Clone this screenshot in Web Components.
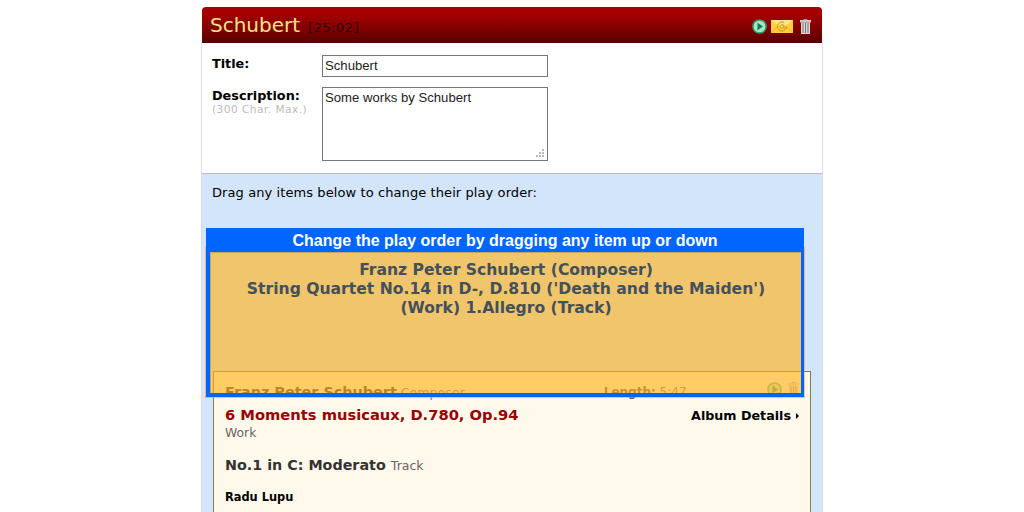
<!DOCTYPE html>
<html>
<head>
<meta charset="utf-8">
<title>Schubert</title>
<style>
  html, body { margin: 0; height: 512px; overflow: hidden; background: #fff; }
  body { font-family: "DejaVu Sans", Verdana, sans-serif; }
</style>
</head>
<body>
<playlist-panel>
  <panel-header slot="header" name="Schubert" time="[25:02]"></panel-header>
  <form-row slot="form" label="Title:" kind="input" value="Schubert"></form-row>
  <form-row slot="form" label="Description:" hint="(300 Char. Max.)" kind="area" value="Some works by Schubert"></form-row>
  <track-card composer="Franz Peter Schubert" length="5:47" work="6 Moments musicaux, D.780, Op.94" track="No.1 in C: Moderato" artist="Radu Lupu"></track-card>
  <drag-helper caption="Change the play order by dragging any item up or down">Franz Peter Schubert (Composer)<br>String Quartet No.14 in D-, D.810 ('Death and the Maiden')<br>(Work) 1.Allegro (Track)</drag-helper>
</playlist-panel>

<script>
// Icons shared by header and track row
const ICON_PLAY = `<svg width="15" height="15" viewBox="0 0 15 15"><circle cx="7.5" cy="7.5" r="6.6" fill="#a5e6c4" stroke="#2f9a6c" stroke-width="1.5"/><path d="M5.5 3.8 L11 7.5 L5.5 11.2 Z" fill="#14795a"/></svg>`;
const ICON_TRASH = `<svg width="11" height="15" viewBox="0 0 11 15"><rect x="3.5" y="0" width="4" height="1.5" fill="#999"/><rect x="0" y="1" width="11" height="2.5" fill="#c9c9c9"/><rect x="1" y="3.5" width="9" height="11.5" fill="#d8d8d8"/><path d="M3 4v10M5.5 4v10M8 4v10" stroke="#777" stroke-width="1"/></svg>`;
const ICON_MAIL = `<svg width="22" height="13" viewBox="0 0 22 13"><rect width="22" height="13" fill="#fdd03f"/><path d="M0 0 L11 8 L22 0 Z" fill="#ffe583"/><path d="M0 13 L7 6 M22 13 L15 6" stroke="#eeb327" stroke-width="1"/><circle cx="11" cy="6.5" r="4.5" fill="none" stroke="#cf9520" stroke-width="1" stroke-dasharray="23 5.3"/><circle cx="11" cy="6.5" r="1.8" fill="none" stroke="#cf9520" stroke-width="1"/><path d="M12.9 4.7 V7.6 Q13.2 8.8 14.6 8" fill="none" stroke="#cf9520" stroke-width="1"/></svg>`;

class PlaylistPanel extends HTMLElement {
  constructor() {
    super();
    this.attachShadow({ mode: 'open' }).innerHTML = `
      <style>
        :host { display: block; position: relative; width: 622px; margin: 7px 0 0 201px; height: 505px; }
        .wrap { display: flex; flex-direction: column; height: 100%; }
        .form { background: #fff; padding: 12px 10px 12px 10px; border-left: 1px solid #ddd; border-right: 1px solid #ddd; border-bottom: 1px solid #bbb; display: flex; flex-direction: column; gap: 10px; }
        .body { flex: 1; background: #d3e5fa; padding: 11px 10px 0 11px; overflow: hidden; border-left: 1px solid #ddd; border-right: 1px solid #ddd; }
        .hint { font-size: 13px; letter-spacing: .09px; line-height: 16px; color: #000; margin-left: -1px; }
        .cards { margin-top: 170px; }
      </style>
      <div class="wrap">
        <slot name="header"></slot>
        <div class="form"><slot name="form"></slot></div>
        <div class="body">
          <div class="hint">Drag any items below to change their play order:</div>
          <div class="cards"><slot></slot></div>
        </div>
      </div>`;
  }
}

class PanelHeader extends HTMLElement {
  constructor() {
    super();
    this.attachShadow({ mode: 'open' });
  }
  connectedCallback() {
    this.shadowRoot.innerHTML = `
      <style>
        :host { display: flex; align-items: center; height: 36px; margin: 0 1px; padding: 0 11px 0 8px; border-radius: 4px 4px 0 0;
          background: linear-gradient(#a90000, #a10000 25%, #5a0000); }
        .name { font-size: 20px; color: #ffe08a; }
        .time { font-size: 13px; color: #2a0000; margin-left: 8px; letter-spacing: .5px; position: relative; top: 2px; }
        .icons { margin-left: auto; display: flex; align-items: center; padding-top: 2px; }
        .icons svg { display: block; }
        .icons svg:nth-child(2) { margin: 0 7px 0 4px; }
      </style>
      <span class="name">${this.getAttribute('name')}</span>
      <span class="time">${this.getAttribute('time')}</span>
      <div class="icons">${ICON_PLAY}${ICON_MAIL}${ICON_TRASH}</div>`;
  }
}

class FormRow extends HTMLElement {
  constructor() {
    super();
    this.attachShadow({ mode: 'open' });
  }
  connectedCallback() {
    const isArea = this.getAttribute('kind') === 'area';
    const hint = this.getAttribute('hint');
    this.shadowRoot.innerHTML = `
      <style>
        :host { display: flex; }
        .lab { width: 110px; flex: none; padding-top: 1px; }
        .lab b { display: block; font-size: 12.8px; line-height: 16px; color: #000; margin-bottom: -1px; }
        .lab small { display: block; font-size: 10.5px; letter-spacing: .5px; line-height: 12px; color: #bbb; }
        .field { width: 226px; box-sizing: border-box; border: 1px solid #777; background: #fff; color: #222;
          font: 13.15px/18px "Liberation Sans", Arial, sans-serif; padding: 1px 2px; position: relative; }
        .input { height: 22px; }
        .area { height: 74px; }
        .grip { position: absolute; right: 2px; bottom: 2px; }
      </style>
      <div class="lab"><b>${this.getAttribute('label')}</b>${hint ? `<small>${hint}</small>` : ''}</div>
      <div class="field ${isArea ? 'area' : 'input'}">${this.getAttribute('value')}${isArea ? `
        <svg class="grip" width="9" height="9" viewBox="0 0 9 9" fill="#bbb"><rect x="6" y="0" width="2" height="2"/><rect x="3" y="3" width="2" height="2"/><rect x="6" y="3" width="2" height="2"/><rect x="0" y="6" width="2" height="2"/><rect x="3" y="6" width="2" height="2"/><rect x="6" y="6" width="2" height="2"/></svg>` : ''}</div>`;
  }
}

class TrackCard extends HTMLElement {
  constructor() {
    super();
    this.attachShadow({ mode: 'open' });
  }
  connectedCallback() {
    const a = n => this.getAttribute(n);
    this.shadowRoot.innerHTML = `
      <style>
        :host { display: block; width: 598px; box-sizing: border-box; height: 300px; background: #fff9ec; border: 1px solid #8a7a4a; padding: 11px 10px 0 11px; color: #333; }
        .top { display: flex; align-items: center; height: 18px; }
        .composer { font-size: 14.4px; font-weight: bold; color: #333; }
        .role { font-size: 12.6px; color: #777; margin-left: 4px; }
        .len { font-size: 12px; color: #777; margin-left: 139px; }
        .len b { color: #555; }
        .tools { display: flex; align-self: flex-start; gap: 6px; margin: -1px 1px 0 auto; opacity: .75; }
        .tools svg { display: block; }
        .work { display: flex; justify-content: space-between; align-items: center; height: 20px; margin-top: 4px; line-height: 20px; }
        .work b { font-size: 14.7px; color: #900; }
        .album { font-size: 12.7px; line-height: 18px; font-weight: bold; color: #000; display: flex; align-items: center; gap: 5px; padding-top: 2px; margin-right: 1px; }
        .album i { width: 0; height: 0; border-left: 3px solid #000; border-top: 3px solid transparent; border-bottom: 3px solid transparent; }
        .type { font-size: 12.4px; line-height: 16px; color: #666; }
        .track { margin-top: 14px; line-height: 20px; }
        .track b { font-size: 14.3px; color: #333; }
        .track span { font-size: 12.5px; color: #666; }
        .artist { margin-top: 12px; font-size: 11.4px; font-weight: bold; line-height: 18px; color: #000; }
      </style>
      <div class="top">
        <span class="composer">${a('composer')}</span><span class="role">Composer</span>
        <span class="len"><b>Length:</b> ${a('length')}</span>
        <span class="tools">${ICON_PLAY}${ICON_TRASH}</span>
      </div>
      <div class="work"><b>${a('work')}</b><span class="album">Album Details <i></i></span></div>
      <div class="type">Work</div>
      <div class="track"><b>${a('track')}</b> <span>Track</span></div>
      <div class="artist">${a('artist')}</div>`;
  }
}

// Item being dragged: lies over the list, so it is the one absolute box here
class DragHelper extends HTMLElement {
  constructor() {
    super();
    this.attachShadow({ mode: 'open' });
  }
  connectedCallback() {
    this.shadowRoot.innerHTML = `
      <style>
        :host { display: block; position: absolute; left: 5px; top: 221px; width: 598px; height: 169px; }
        .box { box-sizing: border-box; height: 100%; display: flex; flex-direction: column; border: solid #0066ff; border-width: 0 3px 4px 4px; }
        .cap { background: #0066ff; height: 24px; margin: 0 -3px 0 -4px; flex: none; text-align: center; color: #fff; font: bold 16px/25px "Liberation Sans", Arial, sans-serif; }
        .ghost { flex: 1; background: rgba(255,180,30,.65); color: #44505a; text-align: center; font-size: 15.6px; font-weight: bold; line-height: 19px; padding-top: 8px; border-top: 1px solid #c9a55a; border-left: 1px solid #c9a55a; }
        .edge { position: absolute; left: -1px; right: -1px; top: 19px; bottom: -1px; border: 1px solid rgba(240,140,60,.5); border-top: 0; pointer-events: none; }
      </style>
      <div class="box">
        <div class="cap">${this.getAttribute('caption')}</div>
        <div class="ghost"><slot></slot></div>
      </div>
      <div class="edge"></div>`;
  }
}

customElements.define('playlist-panel', PlaylistPanel);
customElements.define('panel-header', PanelHeader);
customElements.define('form-row', FormRow);
customElements.define('track-card', TrackCard);
customElements.define('drag-helper', DragHelper);
</script>
</body>
</html>
